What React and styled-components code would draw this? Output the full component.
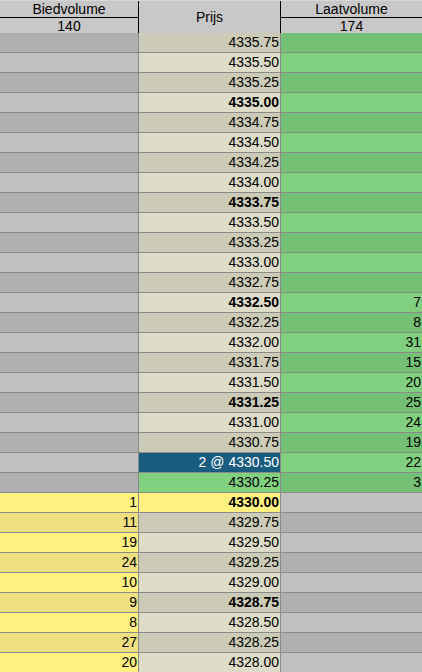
import React from "react";
import styled, { createGlobalStyle, css } from "styled-components";

const Global = createGlobalStyle`
  html, body { margin: 0; padding: 0; background: #c0c0c0; }
  body { font-family: "Liberation Sans", Arial, sans-serif; }
`;

const Ladder = styled.div`
  width: 422px;
  font-family: "Liberation Sans", Arial, sans-serif;
  font-size: 14px;
  color: #000;
`;

const Header = styled.div`
  display: grid;
  grid-template-columns: 138px 141px 141px;
  column-gap: 1px;
  background: #000;
  height: 33px;
  border-top: 1px solid #d6d6d6;
  box-sizing: border-box;
`;

const HeadCol = styled.div`
  background: #c8c8c8;
  display: flex;
  flex-direction: column;
`;

const HeadTop = styled.div`
  height: 16px;
  line-height: 16px;
  text-align: center;
  border-bottom: 1px solid #000;
`;

const HeadBottom = styled.div`
  height: 15px;
  line-height: 16px;
  text-align: center;
`;

const HeadMid = styled.div`
  flex: 1;
  display: flex;
  align-items: center;
  justify-content: center;
  padding-bottom: 1px;
`;

const Row = styled.div`
  display: grid;
  grid-template-columns: 138px 141px 141px;
  column-gap: 1px;
  background: #8a8a8a;
  padding-bottom: 1px;
`;

const palettes = {
  gray: ["#b0b0b0", "#c0c0c0"],
  price: ["#cbcbb8", "#dcdcc8"],
  green: ["#74c074", "#80d080"],
  yellow: ["#f0e080", "#fff080"],
};

const Cell = styled.div`
  height: 19px;
  line-height: 19px;
  text-align: right;
  padding-right: 1px;
  white-space: nowrap;
  overflow: hidden;
  background: ${(p) => palettes[p.$tone][p.$odd ? 1 : 0]};
  font-weight: ${(p) => (p.$bold ? "bold" : "normal")};
  ${(p) =>
    p.$selected &&
    css`
      background: #1a5c80;
      color: #fff;
    `}
  ${(p) =>
    p.$fill &&
    css`
      background: ${p.$fill};
    `}
`;

const asks = {
  "4332.50": 7,
  "4332.25": 8,
  "4332.00": 31,
  "4331.75": 15,
  "4331.50": 20,
  "4331.25": 25,
  "4331.00": 24,
  "4330.75": 19,
  "4330.50": 22,
  "4330.25": 3,
};

const bids = {
  "4330.00": 1,
  "4329.75": 11,
  "4329.50": 19,
  "4329.25": 24,
  "4329.00": 10,
  "4328.75": 9,
  "4328.50": 8,
  "4328.25": 27,
  "4328.00": 20,
};

const rows = Array.from({ length: 32 }, (_, i) => {
  const ticks = 17343 - i; // 4335.75 * 4
  const price = (ticks / 4).toFixed(2);
  return { i, price, bold: ticks % 5 === 0 };
});

export default function App() {
  return (
    <>
      <Global />
      <Ladder>
        <Header>
          <HeadCol>
            <HeadTop>Biedvolume</HeadTop>
            <HeadBottom>140</HeadBottom>
          </HeadCol>
          <HeadCol>
            <HeadMid>Prijs</HeadMid>
          </HeadCol>
          <HeadCol>
            <HeadTop>Laatvolume</HeadTop>
            <HeadBottom>174</HeadBottom>
          </HeadCol>
        </Header>
        {rows.map(({ i, price, bold }) => {
          const odd = i % 2 === 1;
          const isBidSide = parseFloat(price) <= 4330.0;
          const bid = bids[price];
          const ask = asks[price];
          const selected = price === "4330.50";
          let priceFill;
          if (price === "4330.25") priceFill = palettes.green[1];
          if (price === "4330.00") priceFill = palettes.yellow[1];
          return (
            <Row key={price}>
              <Cell $tone={isBidSide ? "yellow" : "gray"} $odd={odd}>
                {bid ?? ""}
              </Cell>
              <Cell
                $tone="price"
                $odd={odd}
                $bold={bold}
                $selected={selected}
                $fill={priceFill}
              >
                {selected ? `2 @ ${price}` : price}
              </Cell>
              <Cell $tone={isBidSide ? "gray" : "green"} $odd={odd}>
                {ask ?? ""}
              </Cell>
            </Row>
          );
        })}
      </Ladder>
    </>
  );
}
